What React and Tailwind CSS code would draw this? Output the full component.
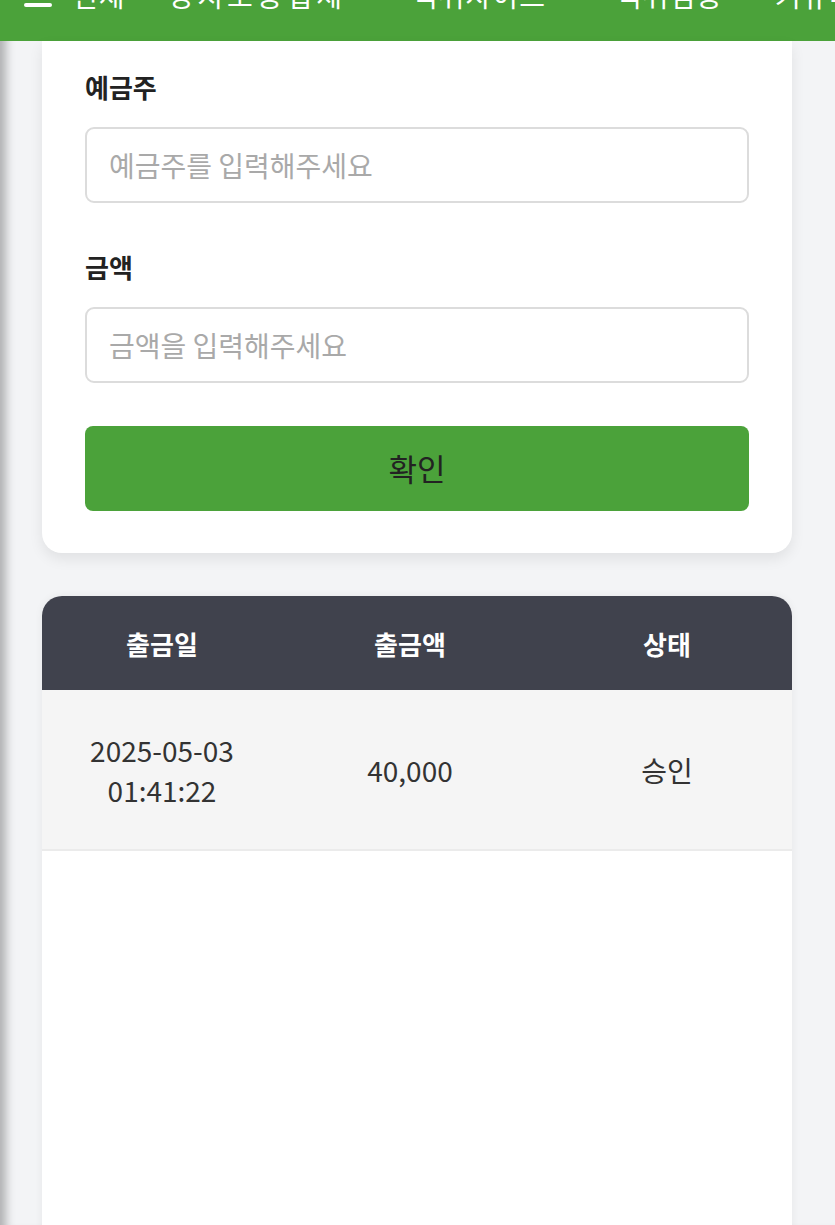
import React from 'react';

const font = { fontFamily: '"Noto Sans CJK KR", "Noto Sans", sans-serif' };

const navItems = ['전체', '성지보증업체', '먹튀사이트', '먹튀검증', '커뮤니티'];

const rows = [
  { date: '2025-05-03', time: '01:41:22', amount: '40,000', status: '승인' },
];

const Field = ({ label, placeholder, className = '' }) => (
  <div className={className}>
    <label className="block text-[26px] leading-[34px] font-bold text-[#222]">{label}</label>
    <input
      type="text"
      placeholder={placeholder}
      className="mt-[23px] block w-full h-[76px] px-[22px] rounded-[9px] border-2 border-[#dcdcdc] bg-white text-[28px] text-[#333] placeholder:text-[#a9a9a9] outline-none"
    />
  </div>
);

const App = () => {
  return (
    <div
      className="min-h-[1225px] h-[1225px] overflow-hidden bg-[#f3f4f6] shadow-[inset_14px_0_10px_-8px_rgba(0,0,0,0.28)]"
      style={font}
    >
      {/* Top nav (scrolled, only the lower part visible) */}
      <div className="h-[41px] bg-[#4ba23a] overflow-hidden">
        <div className="flex items-center pl-[24px] -mt-[21px] h-[32px] whitespace-nowrap text-white text-[28px] leading-[32px] tracking-[1px]">
          <div className="flex items-center gap-[20px]">
            <div className="flex flex-col gap-[6px] w-[28px]">
              <span className="block h-[4px] bg-white rounded-sm" />
              <span className="block h-[4px] bg-white rounded-sm" />
              <span className="block h-[4px] bg-white rounded-sm" />
            </div>
            <span>{navItems[0]}</span>
          </div>
          <span className="ml-[42px] tracking-[4px]">{navItems[1]}</span>
          <span className="ml-[66px]">{navItems[2]}</span>
          <span className="ml-[70px]">{navItems[3]}</span>
          <span className="ml-[52px]">{navItems[4]}</span>
        </div>
      </div>

      <div className="px-[42px] pr-[43px]">
        {/* Form card */}
        <div className="bg-white rounded-b-[20px] shadow-[0_6px_14px_rgba(0,0,0,0.08)] px-[43px] pt-[29px] pb-[42px]">
          <Field label="예금주" placeholder="예금주를 입력해주세요" />
          <Field label="금액" placeholder="금액을 입력해주세요" className="mt-[47px]" />
          <button className="mt-[43px] w-full h-[85px] rounded-[8px] bg-[#4ba23a] text-[31px] text-[#222]">
            확인
          </button>
        </div>

        {/* History table */}
        <div className="mt-[43px] bg-white rounded-t-[20px] h-[700px] overflow-hidden shadow-[0_0_8px_rgba(0,0,0,0.06)]">
          <div className="grid grid-cols-3 h-[94px] items-center bg-[#40424d] text-white text-[26px] font-bold">
            <div className="text-center pr-[10px]">출금일</div>
            <div className="text-center pr-[14px]">출금액</div>
            <div className="text-center">상태</div>
          </div>
          {rows.map((row) => (
            <div
              key={row.date + row.time}
              className="grid grid-cols-3 h-[161px] items-center bg-[#f5f5f5] border-b-2 border-[#ebebeb] text-[28px] text-[#333] leading-[40px]"
            >
              <div className="text-center pr-[10px]">
                <div>{row.date}</div>
                <div>{row.time}</div>
              </div>
              <div className="text-center pr-[14px]">{row.amount}</div>
              <div className="text-center">{row.status}</div>
            </div>
          ))}
        </div>
      </div>
    </div>
  );
};

export default App;
